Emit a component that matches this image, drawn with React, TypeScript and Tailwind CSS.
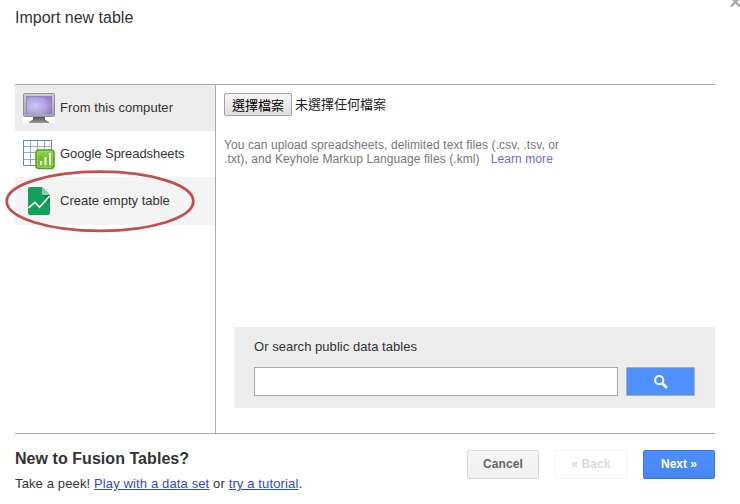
import type { ReactNode } from "react";

function ComputerIcon() {
  return (
    <svg width="32" height="30" viewBox="0 0 32 30" className="block">
      <defs>
        <radialGradient id="screen" cx="0.35" cy="0.55" r="0.75">
          <stop offset="0" stopColor="#cbc8f3" />
          <stop offset="0.55" stopColor="#b0a4e2" />
          <stop offset="1" stopColor="#9470c5" />
        </radialGradient>
        <linearGradient id="bezel" x1="0" y1="0" x2="0" y2="1">
          <stop offset="0" stopColor="#cdcdcd" />
          <stop offset="1" stopColor="#a6a6a6" />
        </linearGradient>
        <linearGradient id="stand" x1="0" y1="0" x2="0" y2="1">
          <stop offset="0" stopColor="#555" />
          <stop offset="1" stopColor="#999" />
        </linearGradient>
      </defs>
      <rect y="23" width="32" height="7" fill="#fff" />
      <rect x="0.5" y="0.5" width="31" height="23" rx="1" fill="url(#bezel)" stroke="#939393" />
      <rect x="3" y="3" width="26" height="18" fill="url(#screen)" />
      <path d="M3.5 21V3.5H29" fill="none" stroke="#8f86bd" strokeWidth="1" />
      <path d="M10 24h12v2.5l4 2.5v1H6v-1l4-2.5z" fill="url(#stand)" />
    </svg>
  );
}

function SpreadsheetIcon() {
  return (
    <svg width="32" height="30" viewBox="0 0 32 30" className="block">
      <defs>
        <linearGradient id="badge" x1="0" y1="0" x2="0" y2="1">
          <stop offset="0" stopColor="#93d350" />
          <stop offset="0.5" stopColor="#6fbd2c" />
          <stop offset="1" stopColor="#79c936" />
        </linearGradient>
      </defs>
      <rect x="0.5" y="0.5" width="28" height="25" fill="#fff" stroke="#6d87ab" />
      <path d="M7.5 1v24M14.5 1v24M21.5 1v24M1 6.5h27M1 12.5h27M1 19.5h27" stroke="#92a9c8" />
      <rect x="13" y="10" width="18" height="18.5" rx="3" fill="url(#badge)" stroke="#4f9f19" strokeWidth="1.6" />
      <rect x="14.3" y="11.3" width="15.4" height="15.9" rx="2" fill="none" stroke="#a1dc69" strokeWidth="0.8" />
      <path d="M18 25v-4M22.5 25v-8M27 25V13" stroke="#fff" strokeWidth="2" />
    </svg>
  );
}

function TableIcon() {
  return (
    <svg width="22" height="28" viewBox="0 0 22 28" className="block">
      <path d="M2 0h12l8 8v18a2 2 0 0 1-2 2H2a2 2 0 0 1-2-2V2a2 2 0 0 1 2-2z" fill="#12a05c" />
      <path d="M14 8h8v7z" fill="#0d8549" />
      <path d="M14 0l8 8h-8z" fill="#86cdaa" />
      <path d="M0.5 21L7 15.3l4.5 4.9L21.7 9" fill="none" stroke="#fff" strokeWidth="1.6" />
    </svg>
  );
}

function SourceRow({ icon, label, className }: { icon: ReactNode; label: string; className: string }) {
  return (
    <div className={`flex items-start ${className}`}>
      <div className="flex w-[45px] shrink-0 justify-start pl-2">{icon}</div>
      <span className="mt-[6px] whitespace-nowrap text-[13px] leading-[18px]">{label}</span>
    </div>
  );
}

function Sources() {
  return (
    <div className="w-[201px] shrink-0 border-r border-[#aaa]">
      <SourceRow icon={<ComputerIcon />} label="From this computer" className="h-[46px] bg-[#ededed] pt-2 tracking-[0.06px]" />
      <SourceRow icon={<SpreadsheetIcon />} label="Google Spreadsheets" className="h-[46px] pt-[9px] tracking-[-0.07px] [&>span]:mt-[5px]" />
      <div className="relative">
        <SourceRow
          icon={<div className="-mt-px ml-[5px]"><TableIcon /></div>}
          label="Create empty table"
          className="h-12 bg-[#f4f4f4] pt-[11px] [&>span]:mt-[4px]"
        />
        <svg width="190" height="64" viewBox="0 0 190 64" className="pointer-events-none absolute -left-[10px] -top-[8px]">
          <ellipse cx="95" cy="32.3" rx="93.3" ry="29.6" fill="none" stroke="#c0504d" strokeWidth="2.8" />
        </svg>
      </div>
    </div>
  );
}

function UploadPane() {
  return (
    <div className="flex flex-1 flex-col">
      <div className="flex items-center gap-[3px] pl-2 pt-2 font-['Noto_Sans_CJK_TC',sans-serif] text-[13px] text-black">
        <button className="h-[23px] w-[68px] rounded-[2px] border border-[#a3a3a3] bg-linear-to-b from-[#f7f7f7] to-[#dedede] text-center leading-[19px]">
          選擇檔案
        </button>
        <span className="-mt-[2px] leading-[22px] text-[#222]">未選擇任何檔案</span>
      </div>
      <p className="ml-2 mt-[22px] whitespace-nowrap text-[12px] leading-[14px] tracking-[0.09px] text-[#777]">
        You can upload spreadsheets, delimited text files (.csv, .tsv, or
        <br />
        .txt), and Keyhole Markup Language files (.kml)
        <a className="ml-[11px] text-[#7468c4]">Learn more</a>
      </p>
      <div className="ml-[18px] mt-auto mb-[25px] h-[81px] bg-[#ededed] pl-5 pt-[11px]">
        <div className="text-[13px] leading-[18px] tracking-[0.04px]">Or search public data tables</div>
        <div className="mt-[11px] flex gap-2">
          <input className="h-[29px] w-[364px] border border-[#aaa] bg-white outline-none" />
          <button className="flex h-[29px] w-[69px] items-center justify-center rounded-[1px] border border-[#a9adb5] bg-[#4d90fe]">
            <svg width="14" height="14" viewBox="0 0 14 14">
              <circle cx="5.2" cy="5.2" r="4.1" fill="none" stroke="#fff" strokeWidth="2" />
              <path d="M8 8l5 5" stroke="#fff" strokeWidth="2.6" />
            </svg>
          </button>
        </div>
      </div>
    </div>
  );
}

function Footer() {
  return (
    <div className="flex justify-between">
      <div>
        <h2 className="mt-[15px] text-[16px] font-bold leading-[20px] tracking-[0.05px]">New to Fusion Tables?</h2>
        <p className="mt-[6px] whitespace-nowrap text-[13px] leading-[18px] tracking-[0.13px]">
          Take a peek! <a className="text-[#3549c8] underline decoration-[#1155cc]">Play with a data set</a> or{" "}
          <a className="text-[#3549c8] underline decoration-[#1155cc]">try a tutorial</a>.
        </p>
      </div>
      <div className="mt-4 flex gap-4 text-[12px] font-bold leading-[27px]">
        <button className="h-[29px] w-[72px] rounded-[2px] border border-[#d9d9d9] bg-linear-to-b from-[#f5f5f5] to-[#f1f1f1] tracking-[0.1px] text-[#666]">Cancel</button>
        <button className="h-[29px] w-[72px] rounded-[2px] border border-[#f6f6f6] bg-white tracking-[0.1px] text-[#dadada]">« Back</button>
        <button className="h-[29px] w-[72px] rounded-[2px] border border-[#3079ed] bg-linear-to-b from-[#4d90fe] to-[#4787ed] text-white">Next »</button>
      </div>
    </div>
  );
}

export default function App() {
  return (
    <div className="relative flex h-[504px] w-[740px] flex-col overflow-hidden bg-white pl-[15px] pr-[25px] font-['Liberation_Sans',Arial,sans-serif] text-[#333]">
      <svg width="12" height="12" viewBox="0 0 12 12" className="absolute -top-[4px] left-[730px]">
        <path d="M1 10.5L10 1.5M1 1.5l9 9" stroke="#aaa" strokeWidth="2.4" />
      </svg>
      <h1 className="h-[84px] pt-[8px] text-[16px] leading-[20px]">Import new table</h1>
      <div className="flex h-[350px] border-y border-[#aaa]">
        <Sources />
        <UploadPane />
      </div>
      <Footer />
    </div>
  );
}
